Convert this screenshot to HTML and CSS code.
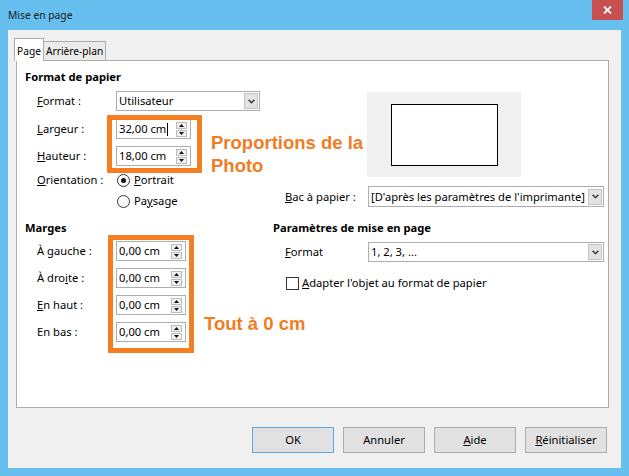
FILE: index.html
```html
<!DOCTYPE html>
<html lang="fr">
<head>
<meta charset="utf-8">
<title>Mise en page</title>
<link rel="stylesheet" href="styles.css">
</head>
<body>
<div class="window">
  <div class="titlebar">
    <span class="title">Mise en page</span>
    <div class="close"><svg width="9" height="8" viewBox="0 0 9 8"><path d="M1 0.5 L8 7.5 M8 0.5 L1 7.5" stroke="#fff" stroke-width="1.8"/></svg></div>
  </div>
  <div class="client">
    <div class="tabs">
      <div class="tab active">Page</div>
      <div class="tab">Arrière-plan</div>
    </div>
    <div class="panel">
      <section class="cell">
        <h3>Format de papier</h3>
        <div class="row r-format">
          <label><u>F</u>ormat :</label>
          <div class="select w-fmt"><span class="val">Utilisateur</span><span class="arrow"><svg width="7" height="5" viewBox="0 0 7 5"><path d="M0.6 0.8 L3.5 3.8 L6.4 0.8" stroke="#333" fill="none" stroke-width="1.4"/></svg></span></div>
        </div>
        <div class="row r-larg">
          <label><u>L</u>argeur :</label>
          <div class="spin w-big"><span class="val">32,00 cm<span class="caret"></span></span><span class="spinbtn"><span class="sb"><svg width="5" height="3" viewBox="0 0 5 3"><path d="M2.5 0 L5 3 L0 3Z"/></svg></span><span class="sb"><svg width="5" height="3" viewBox="0 0 5 3"><path d="M0 0 L5 0 L2.5 3Z"/></svg></span></span></div>
        </div>
        <div class="row r-haut">
          <label><u>H</u>auteur :</label>
          <div class="spin w-big"><span class="val">18,00 cm</span><span class="spinbtn"><span class="sb"><svg width="5" height="3" viewBox="0 0 5 3"><path d="M2.5 0 L5 3 L0 3Z"/></svg></span><span class="sb"><svg width="5" height="3" viewBox="0 0 5 3"><path d="M0 0 L5 0 L2.5 3Z"/></svg></span></span></div>
        </div>
        <div class="row small r-orient">
          <label><u>O</u>rientation :</label>
          <span class="radio checked"></span><span class="opt"><u>P</u>ortrait</span>
        </div>
        <div class="row small r-pays indent">
          <span class="radio"></span><span class="opt">Pa<u>y</u>sage</span>
        </div>
      </section>
      <section class="cell">
        <div class="preview"><div class="page"></div></div>
        <div class="row r-bac wide">
          <label><u>B</u>ac à papier :</label>
          <div class="select w-long"><span class="val">[D'après les paramètres de l'imprimante]</span><span class="arrow"><svg width="7" height="5" viewBox="0 0 7 5"><path d="M0.6 0.8 L3.5 3.8 L6.4 0.8" stroke="#333" fill="none" stroke-width="1.4"/></svg></span></div>
        </div>
      </section>
      <section class="cell second">
        <h3>Marges</h3>
        <div class="row r-m1">
          <label>À <u>g</u>auche :</label>
          <div class="spin w-sm"><span class="val">0,00 cm</span><span class="spinbtn"><span class="sb"><svg width="5" height="3" viewBox="0 0 5 3"><path d="M2.5 0 L5 3 L0 3Z"/></svg></span><span class="sb"><svg width="5" height="3" viewBox="0 0 5 3"><path d="M0 0 L5 0 L2.5 3Z"/></svg></span></span></div>
        </div>
        <div class="row r-m">
          <label>À dro<u>i</u>te :</label>
          <div class="spin w-sm"><span class="val">0,00 cm</span><span class="spinbtn"><span class="sb"><svg width="5" height="3" viewBox="0 0 5 3"><path d="M2.5 0 L5 3 L0 3Z"/></svg></span><span class="sb"><svg width="5" height="3" viewBox="0 0 5 3"><path d="M0 0 L5 0 L2.5 3Z"/></svg></span></span></div>
        </div>
        <div class="row r-m">
          <label><u>E</u>n haut :</label>
          <div class="spin w-sm"><span class="val">0,00 cm</span><span class="spinbtn"><span class="sb"><svg width="5" height="3" viewBox="0 0 5 3"><path d="M2.5 0 L5 3 L0 3Z"/></svg></span><span class="sb"><svg width="5" height="3" viewBox="0 0 5 3"><path d="M0 0 L5 0 L2.5 3Z"/></svg></span></span></div>
        </div>
        <div class="row r-m">
          <label>En bas :</label>
          <div class="spin w-sm"><span class="val">0,00 cm</span><span class="spinbtn"><span class="sb"><svg width="5" height="3" viewBox="0 0 5 3"><path d="M2.5 0 L5 3 L0 3Z"/></svg></span><span class="sb"><svg width="5" height="3" viewBox="0 0 5 3"><path d="M0 0 L5 0 L2.5 3Z"/></svg></span></span></div>
        </div>
      </section>
      <section class="cell second">
        <h3>Paramètres de mise en page</h3>
        <div class="row r-fmt2 wide">
          <label><u>F</u>ormat</label>
          <div class="select w-long"><span class="val">1, 2, 3, ...</span><span class="arrow"><svg width="7" height="5" viewBox="0 0 7 5"><path d="M0.6 0.8 L3.5 3.8 L6.4 0.8" stroke="#333" fill="none" stroke-width="1.4"/></svg></span></div>
        </div>
        <div class="row small r-check">
          <span class="checkbox"></span><span class="opt"><u>A</u>dapter l'objet au format de papier</span>
        </div>
      </section>
    </div>
    <div class="buttons">
      <div class="btn default">OK</div>
      <div class="btn">Annuler</div>
      <div class="btn"><u>A</u>ide</div>
      <div class="btn"><u>R</u>éinitialiser</div>
    </div>
  </div>

  <div class="annot-box box-dim"></div>
  <div class="annot-box box-marg"></div>
  <div class="annot-text text-dim">Proportions de la<br>Photo</div>
  <div class="annot-text text-marg">Tout à 0 cm</div>
</div>
</body>
</html>
```

FILE: styles.css
```css
html, body {
  margin: 0;
  padding: 0;
}

body {
  font-family: "Noto Sans", "Open Sans", sans-serif;
  font-size: 11.2px;
  line-height: 16px;
  color: #000;
  background: #fff;
}

u {
  text-decoration: underline;
  text-underline-offset: 1px;
}

.window {
  position: relative;
  width: 629px;
  height: 476px;
  box-sizing: border-box;
  background: #66bfee;
  padding: 0 8px 8px;
  overflow: hidden;
}

.titlebar {
  height: 30px;
  display: flex;
  align-items: flex-start;
}

.title {
  font-size: 10.3px;
  line-height: 30px;
  color: #1a1a1a;
}

.close {
  margin-left: auto;
  margin-right: -2px;
  width: 31px;
  height: 20px;
  background: #c75050;
  display: flex;
  align-items: center;
  justify-content: center;
}

.client {
  height: 438px;
  box-sizing: border-box;
  background: #f0f0f0;
  padding: 8px 12px 0 8px;
  display: flex;
  flex-direction: column;
}

.tabs {
  display: flex;
  align-items: flex-end;
  height: 22px;
  margin-left: -2px;
  position: relative;
  z-index: 1;
  font-size: 10.2px;
}

.tab {
  height: 19px;
  box-sizing: border-box;
  border: 1px solid #acacac;
  border-bottom: none;
  border-left: none;
  background: #ebebeb;
  padding: 0 2px;
  line-height: 18px;
}

.tab.active {
  height: 23px;
  margin-bottom: -1px;
  background: #fff;
  border-left: 1px solid #acacac;
  padding: 3px 2px 0 2px;
  width: 30px;
}

.panel {
  height: 348px;
  box-sizing: border-box;
  border: 1px solid #adadad;
  background: #fff;
  padding: 8px 0 0 8px;
  display: grid;
  grid-template-columns: 248px 1fr;
  grid-template-rows: auto auto;
  align-content: start;
}

.cell {
  display: flex;
  flex-direction: column;
}

.cell.second {
  margin-top: 11px;
}

h3 {
  margin: 0;
  font-size: 11.2px;
  font-weight: bold;
  line-height: 16px;
}

.row {
  display: flex;
  align-items: center;
  height: 20px;
  padding-left: 12px;
  white-space: nowrap;
}

.row.small {
  height: 16px;
}

.row label {
  width: 79px;
  flex: none;
}

.row.wide label {
  width: 83px;
}

.row.indent {
  padding-left: 91px;
}

.r-format { margin-top: 6px; }
.r-larg { margin-top: 8px; }
.r-haut { margin-top: 7px; }
.r-orient { margin-top: 6px; }
.r-pays { margin-top: 5px; }
.r-bac { margin-top: 9px; height: 21px; }
.r-m1 { margin-top: 5px; }
.r-m { margin-top: 7px; }
.r-fmt2 { margin-top: 6px; }
.r-check { margin-top: 13px; padding-left: 13px; }

.select,
.spin {
  height: 100%;
  box-sizing: border-box;
  border: 1px solid #abadb3;
  background: #fff;
  display: flex;
  align-items: center;
  padding-left: 2px;
}

.w-fmt { width: 144px; }
.w-long { width: 236px; }
.w-big { width: 75px; }
.w-sm { width: 70px; }

.val {
  flex: 1;
  display: flex;
  align-items: center;
  overflow: hidden;
}

.caret {
  display: inline-block;
  width: 1px;
  height: 13px;
  background: #000;
  margin-left: 1px;
}

.arrow {
  margin-left: auto;
  margin-right: 1px;
  width: 14px;
  height: 16px;
  box-sizing: border-box;
  border: 1px solid #c4c4c4;
  background: #e3e3e3;
  display: flex;
  align-items: center;
  justify-content: center;
}

.spinbtn {
  display: flex;
  flex-direction: column;
  width: 11px;
  height: 15px;
  margin-right: 3px;
  gap: 1px;
}

.sb {
  flex: 1;
  box-sizing: border-box;
  border: 1px solid #bcbcbc;
  background: #efefef;
  display: flex;
  align-items: center;
  justify-content: center;
}

.sb svg path {
  fill: #111;
}

.radio {
  width: 13px;
  height: 13px;
  box-sizing: border-box;
  border: 1px solid #333;
  border-radius: 50%;
  background: #fff;
  flex: none;
  display: flex;
  align-items: center;
  justify-content: center;
  margin-left: 1px;
}

.radio.checked::after {
  content: "";
  width: 5px;
  height: 5px;
  border-radius: 50%;
  background: #111;
}

.checkbox {
  width: 13px;
  height: 13px;
  box-sizing: border-box;
  border: 1px solid #333;
  background: #fff;
  flex: none;
}

.opt {
  margin-left: 4px;
}

.checkbox + .opt {
  margin-left: 3px;
}

.preview {
  margin-top: 23px;
  margin-left: 94px;
  width: 154px;
  height: 85px;
  background: #f0f0f0;
  display: flex;
  align-items: center;
  justify-content: center;
}

.page {
  width: 107px;
  height: 62px;
  box-sizing: border-box;
  border: 1px solid #000;
  background: #fff;
}

.buttons {
  display: flex;
  justify-content: flex-end;
  gap: 9px;
  margin-top: 19px;
  margin-right: 2px;
}

.btn {
  width: 82px;
  height: 26px;
  box-sizing: border-box;
  border: 1px solid #adadad;
  background: #e1e1e1;
  display: flex;
  align-items: center;
  justify-content: center;
}

.btn.default {
  border-color: #5ba7e3;
}

/* annotations drawn over the dialog */
.annot-box {
  position: absolute;
  box-sizing: border-box;
  border: 5px solid #f47f20;
}

.box-dim {
  left: 107px;
  top: 115px;
  width: 95px;
  height: 58px;
}

.box-marg {
  left: 108px;
  top: 235px;
  width: 86px;
  height: 118px;
}

.annot-text {
  position: absolute;
  font-family: "Liberation Sans", Arial, sans-serif;
  font-weight: bold;
  font-size: 18.5px;
  line-height: 23px;
  color: #f07d23;
  white-space: nowrap;
}

.text-dim {
  left: 211px;
  top: 131px;
}

.text-marg {
  left: 204px;
  top: 312px;
}
```
